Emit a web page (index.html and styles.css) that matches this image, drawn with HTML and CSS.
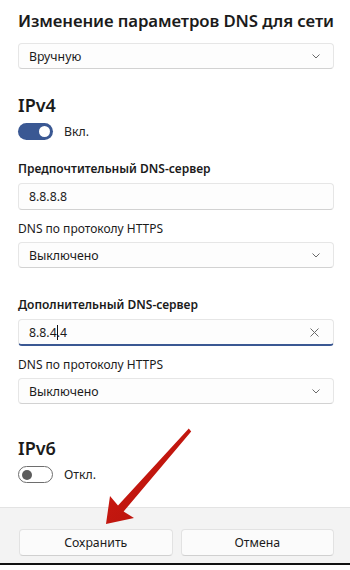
FILE: index.html
```html
<!DOCTYPE html>
<html lang="ru">
<head>
<meta charset="utf-8">
<link rel="stylesheet" href="styles.css">
</head>
<body>
<div class="page">
  <main class="content">
    <h1 class="title">Изменение параметров DNS для сети</h1>
    <div class="select mode"><span>Вручную</span><svg class="chev" viewBox="0 0 8 5" width="8" height="5"><path d="M0.5 0.5 L4 4 L7.5 0.5" fill="none" stroke="#6a6a6a" stroke-width="1"/></svg></div>

    <h2 class="section v4">IPv4</h2>
    <div class="toggle-row"><span class="toggle on"><span class="knob"></span></span><span class="toggle-label">Вкл.</span></div>

    <div class="label strong l1">Предпочтительный DNS-сервер</div>
    <div class="input"><span>8.8.8.8</span></div>
    <div class="label l2">DNS по протоколу HTTPS</div>
    <div class="select"><span>Выключено</span><svg class="chev" viewBox="0 0 8 5" width="8" height="5"><path d="M0.5 0.5 L4 4 L7.5 0.5" fill="none" stroke="#6a6a6a" stroke-width="1"/></svg></div>

    <div class="label strong l3">Дополнительный DNS-сервер</div>
    <div class="input focused"><span>8.8.4<span class="caret"></span>.4</span><svg class="clear" viewBox="0 0 9 9" width="9" height="9"><path d="M0.5 0.5 L8.5 8.5 M8.5 0.5 L0.5 8.5" stroke="#6a6a6a" stroke-width="1"/></svg></div>
    <div class="label l2">DNS по протоколу HTTPS</div>
    <div class="select"><span>Выключено</span><svg class="chev" viewBox="0 0 8 5" width="8" height="5"><path d="M0.5 0.5 L4 4 L7.5 0.5" fill="none" stroke="#6a6a6a" stroke-width="1"/></svg></div>

    <h2 class="section v6">IPv6</h2>
    <div class="toggle-row"><span class="toggle off"><span class="knob"></span></span><span class="toggle-label">Откл.</span></div>
  </main>
  <footer class="footer">
    <button class="btn">Сохранить</button>
    <button class="btn">Отмена</button>
  </footer>
  <div class="edge"></div>
  <svg class="arrow" viewBox="0 0 350 570" width="350" height="570">
    <defs>
      <linearGradient id="ag" x1="0" y1="0" x2="1" y2="1">
        <stop offset="0" stop-color="#d41b12"/>
        <stop offset="1" stop-color="#b0120b"/>
      </linearGradient>
    </defs>
    <polygon points="106,524 110,496 118,505.5 188.8,428.6 191.2,431.4 123.6,511.5 134,518" fill="url(#ag)"/>
  </svg>
</div>
</body>
</html>
```
FILE: styles.css
```css
* { box-sizing: border-box; }
html, body { margin: 0; padding: 0; background: #fff; }
body {
  font-family: "Noto Sans", "Open Sans", sans-serif;
  color: #1b1b1b;
  width: 350px;
  height: 570px;
  overflow: hidden;
}
.page { position: relative; width: 350px; height: 570px; display: flex; flex-direction: column; }
.content { padding: 0 16px 0 18px; display: flex; flex-direction: column; height: 507px; }
.title {
  margin: 10px 0 11px;
  font-size: 16.8px;
  line-height: 22px;
  font-weight: 600;
  letter-spacing: -0.1px;
  white-space: nowrap;
}
.select, .input {
  height: 26px;
  border: 1px solid #e6e6e6;
  border-bottom-color: #d2d2d2;
  border-radius: 4px;
  background: #fdfdfd;
  display: flex;
  align-items: center;
  justify-content: space-between;
  padding: 0 13px 0 10px;
  font-size: 12.3px;
  flex: none;
}
.input { height: 27px; }
.chev { display: block; }
.section {
  margin: 25px 0 0;
  font-size: 18px;
  line-height: 22px;
  font-weight: 600;
}
.section.v6 { margin-top: 33px; }
.toggle-row { display: flex; align-items: center; margin-top: 7px; height: 17px; }
.toggle {
  width: 35px; height: 17px; border-radius: 9px; display: flex; align-items: center; padding: 0 3px;
}
.toggle.on { background: #3a5893; justify-content: flex-end; }
.toggle.on .knob { width: 11px; height: 11px; border-radius: 50%; background: #fff; }
.toggle.off { border: 1px solid #6e6e6e; background: #fff; justify-content: flex-start; }
.toggle.off .knob { width: 10px; height: 10px; border-radius: 50%; background: #5c5c5c; }
.toggle-label { margin-left: 11px; font-size: 12.3px; color: #222; }
.label { font-size: 12px; line-height: 18px; height: 18px; flex: none; }
.label.strong { font-weight: 600; }
.l1 { margin-top: 20px; margin-bottom: 5px; }
.l2 { margin-top: 10px; margin-bottom: 4px; }
.l3 { margin-top: 28px; margin-bottom: 5px; }
.input.focused { border-bottom: 2px solid #3a5893; padding-right: 14px; }
.caret { display: inline-block; width: 1px; height: 15px; background: #111; vertical-align: -3px; margin-right: -1px; }
.clear { display: block; }
.footer {
  height: 56px;
  background: #f3f3f3;
  border-top: 1px solid #e3e3e3;
  display: flex;
  gap: 8px;
  padding: 21px 16px 0 19px;
}
.btn {
  flex: 1;
  height: 27px;
  border: 1px solid #e2e2e2;
  border-bottom-color: #d0d0d0;
  border-radius: 4px;
  background: #fbfbfb;
  font-family: inherit;
  font-size: 12.3px;
  color: #1b1b1b;
  padding: 0;
}
.edge { height: 2px; background: #111; }
.arrow { position: absolute; left: 0; top: 0; pointer-events: none; }
```
